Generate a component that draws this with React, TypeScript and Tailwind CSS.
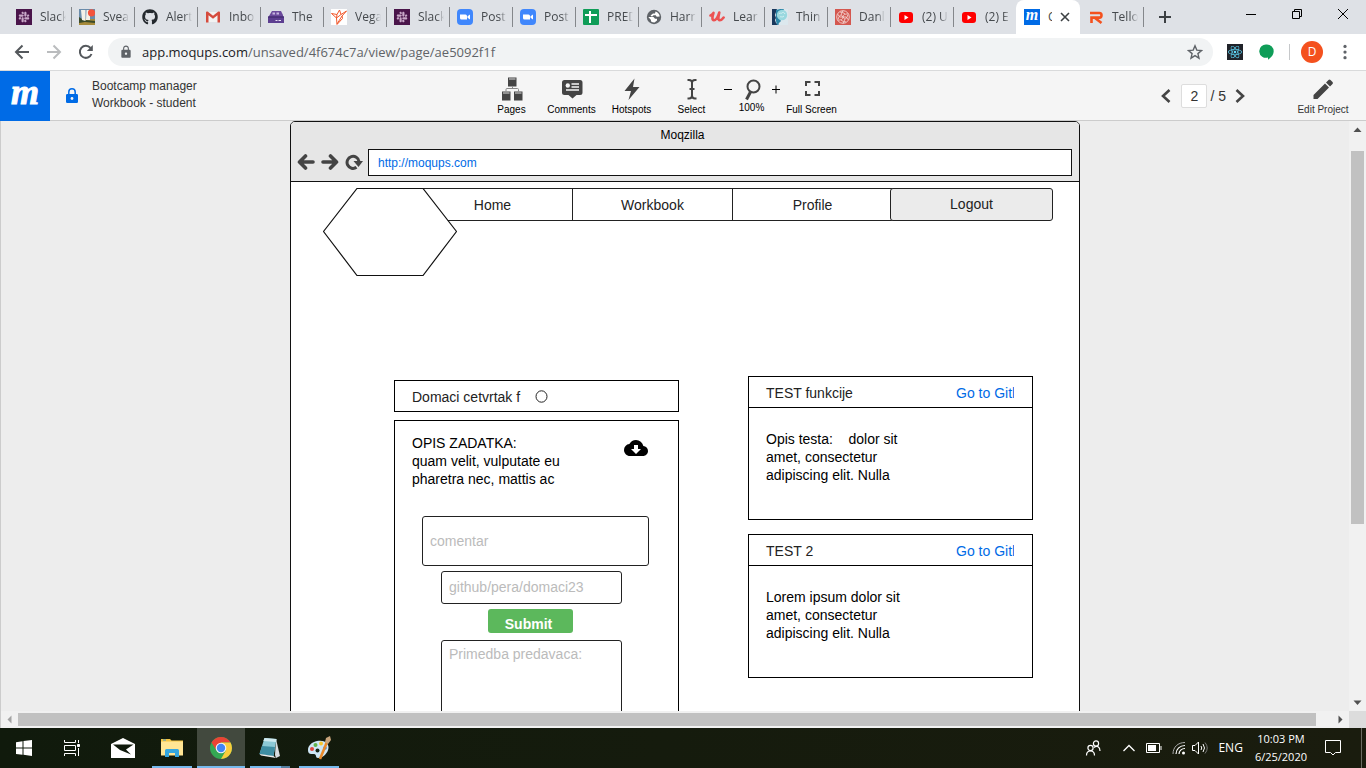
import type { ReactNode } from "react";
import { FaGithub, FaReact, FaSlack } from "react-icons/fa";
import { MdCloudDownload, MdLock } from "react-icons/md";

/* ---------- Favicons ---------- */

const SlackIcon = () => (
  <span className="flex size-4 shrink-0 items-center justify-center bg-[#4a154b]">
    <FaSlack className="size-3 text-[#c9a9c9]" />
  </span>
);

const SveaIcon = () => (
  <svg viewBox="0 0 16 16" className="size-4 shrink-0">
    <path fill="#6a8cab" d="M0 0h16v16H0z" />
    <path fill="#a68a3a" d="M0 10h16v6H0z" />
    <path fill="#3a4a2a" d="M0 8l3 2 3 1 10 1v2L6 13 0 14z" />
    <path fill="#f4f1e8" d="M2 1h4.500v11L3 11zM7.500 1H11v10H7z" />
    <circle cx="12.500" cy="3.800" r="3.600" fill="#f4533c" />
  </svg>
);

const GmailIcon = () => (
  <svg viewBox="0 0 16 16" className="size-4 shrink-0">
    <path fill="#f2f2f2" d="M2 3h12v10H2z" />
    <path fill="#d54b3d" d="M1 3.500C1 2.600 2.200 2.200 3 2.800l5 4 5-4c.8-.6 2-.2 2 .7V13.500h-2.500V6.300L8 9.800 3.500 6.300v7.200H1z" />
  </svg>
);

const ArchiveIcon = () => (
  <svg viewBox="0 0 16 16" className="size-4 shrink-0">
    <path fill="#6b4a9c" d="M4 2h9l2 4v2H1V7z" />
    <path fill="#c7b6e0" d="M4.500 3.500H7v2H4.500zM8.500 3.500H11v2H8.500z" />
    <path fill="#5d3f91" d="M0 7.500h16V14H0z" />
    <path fill="none" stroke="#3b2366" d="M0 8h16" />
    <path fill="none" stroke="#e9e0f5" d="M7.500 11.500h2M10.500 11.500h2.500" />
  </svg>
);

const VegaIcon = () => (
  <svg viewBox="0 0 16 16" className="size-4 shrink-0">
    <path fill="#fff" d="M0 0h16v16H0z" />
    <path fill="none" stroke="#f1582c" d="M.5 4.500L6 5.500 8.500 1l1.500 4.500 5.500-3.500-4.500 5 .5 2.500-5.500 6-.5-6.500zM6 5.500L5.500 9M10 5.500L5.500 9M11 7L6 15" />
  </svg>
);

const ZoomIcon = () => (
  <svg viewBox="0 0 16 16" className="size-4 shrink-0">
    <rect width="16" height="16" rx="4" fill="#4087fc" />
    <path fill="#fff" d="M3 5.500h5.500q1.500 0 1.500 1.500v3.500H4.500Q3 10.500 3 9zM10.500 7.300L13 5.500v5L10.500 8.800z" />
  </svg>
);

const SheetIcon = () => (
  <svg viewBox="0 0 16 16" className="size-4 shrink-0">
    <rect width="16" height="16" rx="1" fill="#0f9d58" />
    <path fill="none" stroke="#fff" strokeWidth="2" d="M2 6h12M7 2v12" />
  </svg>
);

const GlobeIcon = () => (
  <svg viewBox="0 0 16 16" className="size-4 shrink-0">
    <circle cx="8" cy="8" r="7.200" fill="#5f6368" />
    <path fill="#fff" d="M9.500 2.500C12 3.300 13.600 5.200 13.700 7.500l-3 .2-1-1.500H7.500L6 7.800 4.500 6.500 7 4.500h2zM2.300 8h5.200l1.500 1.700h2v1.800L8.500 13.600C5.500 13.500 4.500 12.500 5 11z" />
  </svg>
);

const UdemyIcon = () => (
  <svg viewBox="0 0 16 16" className="size-4 shrink-0">
    <path fill="none" stroke="#ec5252" strokeWidth="2.600" strokeLinecap="round" strokeLinejoin="round" d="M1.500 6.500C3 6 3.800 5 4.500 3.800 3.500 7 2.500 11 5 11.200 8 11.300 9.500 6 10.300 3.500 9.500 7 8.500 11 10.800 11.200 12.500 11.300 13.500 10 14.600 8.500" />
  </svg>
);

const HeadIcon = () => (
  <svg viewBox="0 0 16 16" className="size-4 shrink-0">
    <path fill="#dce8ee" d="M0 0h16v16H0z" />
    <path fill="#19375c" d="M0 0h5L3 6l1 3-1 2 1 3 3 2H0z" />
    <path fill="#2c86a8" d="M4 1l4-1h4l-5 9 2 3-2 2-1 2H5l-1-4z" />
    <circle cx="10" cy="6" r="5.200" fill="#9ad8df" />
    <path fill="none" stroke="#d5f1f3" d="M7 5c1-2 2 0 3-1s2-1 3 1M8 8c1-1 2 1 4-1" />
  </svg>
);

const KnotIcon = () => (
  <svg viewBox="0 0 16 16" className="size-4 shrink-0">
    <path fill="#d4574f" d="M0 0h16v16H0z" />
    <g fill="none" stroke="#f3d3cf" strokeWidth=".9">
      <circle cx="8" cy="8" r="6.300" />
      <path d="M8 8Q5 6 8 1.700M8 8Q8 4.500 13.500 5M8 8Q11.500 6.500 13.500 11M8 8Q11 10 8 14.300M8 8Q8 11.500 2.500 11M8 8Q4.500 9.500 2.500 5M5 3q3 0 5 2M12.800 6q-.5 3-3 4.500M11 13q-3 0-5-2M3.200 10q.5-3 3-4.500" />
    </g>
  </svg>
);

const YoutubeIcon = () => (
  <svg viewBox="0 0 16 16" className="size-4 shrink-0">
    <rect x="1" y="3" width="14" height="11" rx="3" fill="#f00" />
    <path fill="#fff" d="M6.500 6v5l4-2.500z" />
  </svg>
);

const MoqupsIcon = () => (
  <span className="flex size-4 shrink-0 items-center justify-center bg-[#006be6]">
    <span className="pb-1 font-['Liberation_Serif',serif] text-[16px] leading-4 font-bold italic text-white">m</span>
  </span>
);

const TelloIcon = () => (
  <svg viewBox="0 0 16 16" className="size-4 shrink-0">
    <path fill="none" stroke="#f4511e" strokeWidth="2.600" d="M2 4h9.500q2 0 2 2.300t-2 2.300H6.500L13.500 14M3.500 14V8.600h3" />
  </svg>
);

const tabs: { title: string; icon: ReactNode; last?: boolean }[] = [
  { title: "Slack", icon: <SlackIcon /> },
  { title: "Svea", icon: <SveaIcon /> },
  { title: "Alert", icon: <FaGithub className="size-4 shrink-0 text-[#24292e]" /> },
  { title: "Inbox", icon: <GmailIcon /> },
  { title: "The", icon: <ArchiveIcon /> },
  { title: "Vega", icon: <VegaIcon /> },
  { title: "Slack", icon: <SlackIcon /> },
  { title: "Post", icon: <ZoomIcon /> },
  { title: "Post", icon: <ZoomIcon /> },
  { title: "PRED", icon: <SheetIcon /> },
  { title: "Harr", icon: <GlobeIcon /> },
  { title: "Lear", icon: <UdemyIcon /> },
  { title: "Thin", icon: <HeadIcon /> },
  { title: "Danl", icon: <KnotIcon /> },
  { title: "(2) U", icon: <YoutubeIcon /> },
  { title: "(2) E", icon: <YoutubeIcon />, last: true },
];

function Tab({ title, icon, last }: { title: string; icon: ReactNode; last?: boolean }) {
  return (
    <button
      type="button"
      className={
        last
          ? "-mr-px flex h-5 w-16 min-w-0 items-center gap-2 border-r border-transparent pl-2"
          : "-mr-px flex h-5 w-16 min-w-0 items-center gap-2 border-r border-[#84878b] pl-2"
      }
    >
      {icon}
      <span className="w-[26px] overflow-hidden text-left whitespace-nowrap [mask-image:linear-gradient(to_right,black_70%,transparent)]">
        {title}
      </span>
    </button>
  );
}

function TabStrip() {
  return (
    <div className="flex h-[34px] shrink-0 items-center bg-[#dee1e6] pl-2 font-['Open_Sans',sans-serif] text-[12px] text-[#45494d]">
      {tabs.map((tab, i) => (
        <Tab key={i} {...tab} />
      ))}
      <div className="flex h-full w-16 items-center gap-2 rounded-t-lg bg-white pl-2">
        <MoqupsIcon />
        <span className="w-1 overflow-hidden">C</span>
        <button type="button" aria-label="Close tab">
          <svg viewBox="0 0 10 10" className="size-2.5">
            <path fill="none" stroke="#3c4043" strokeWidth="1.600" d="M1 1l8 8M9 1L1 9" />
          </svg>
        </button>
      </div>
      <Tab title="Tello" icon={<TelloIcon />} />
      <button type="button" aria-label="New tab" className="ml-4">
        <svg viewBox="0 0 12 12" className="size-3">
          <path fill="none" stroke="#3c4043" strokeWidth="2" d="M6 0v12M0 6h12" />
        </svg>
      </button>
      <div className="ml-auto flex h-7 self-start">
        <button type="button" aria-label="Minimize" className="flex w-[46px] items-center justify-center">
          <svg viewBox="0 0 10 10" className="size-2.5">
            <path fill="none" stroke="#000" d="M0 5.500h10" />
          </svg>
        </button>
        <button type="button" aria-label="Restore" className="flex w-[46px] items-center justify-center">
          <svg viewBox="0 0 10 10" className="size-2.5">
            <path fill="none" stroke="#000" d="M.5 2.500h7v7h-7zM2.500 2.500v-2h7v7h-2" />
          </svg>
        </button>
        <button type="button" aria-label="Close" className="flex w-[46px] items-center justify-center">
          <svg viewBox="0 0 10 10" className="size-2.5">
            <path fill="none" stroke="#000" d="M0 0l10 10M10 0L0 10" />
          </svg>
        </button>
      </div>
    </div>
  );
}

function AddressBar() {
  return (
    <div className="flex h-[37px] shrink-0 items-center border-b border-[#d9dadb] bg-white pl-[14px]">
      <div className="flex w-[94px] gap-4">
        <button type="button" aria-label="Back">
          <svg viewBox="0 0 16 16" className="size-4">
            <path fill="none" stroke="#54585c" strokeWidth="2" d="M15 8H2M8.500 1.500L2 8l6.500 6.500" />
          </svg>
        </button>
        <button type="button" aria-label="Forward">
          <svg viewBox="0 0 16 16" className="size-4">
            <path fill="none" stroke="#babcbe" strokeWidth="2" d="M1 8h13M7.500 1.500L14 8l-6.500 6.500" />
          </svg>
        </button>
        <button type="button" aria-label="Reload">
          <svg viewBox="0 0 16 16" className="size-4">
            <path fill="none" stroke="#54585c" strokeWidth="2" d="M13.500 10A6 6 0 1 1 12.500 4" />
            <path fill="#54585c" d="M14.800 1v6H8.800z" />
          </svg>
        </button>
      </div>
      <div className="flex h-7 flex-1 items-center rounded-full bg-[#f1f3f4] pr-[10px] pl-[11px] font-['Open_Sans',sans-serif] text-[13px] text-[#5f6368]">
        <MdLock className="size-3.5 shrink-0" />
        <div className="ml-[9px] flex-1 pt-px">
          <span className="text-[#202124]">app.moqups.com</span>/unsaved/4f674c7a/view/page/ae5092f1f
        </div>
        <button type="button" aria-label="Bookmark">
          <svg viewBox="0 0 16 16" className="size-4">
            <path fill="none" stroke="#5f6368" strokeWidth="1.400" d="M8 1.800l1.800 4.300 4.700.4-3.600 3.100 1.100 4.600L8 11.700l-4 2.500 1.100-4.600L1.500 6.500l4.700-.4z" />
          </svg>
        </button>
      </div>
      <div className="flex w-[153px] items-center pl-[14px]">
        <button type="button" aria-label="React tools" className="flex size-4 items-center justify-center bg-[#20232a]">
          <FaReact className="size-3.5 text-[#61dafb]" />
        </button>
        <button type="button" aria-label="Hangouts" className="ml-4">
          <svg viewBox="0 0 16 16" className="size-4">
            <path fill="#0f9d58" d="M8 .5a6.700 6.700 0 0 1 6.700 6.700c0 4-3 6.500-5.700 8.600v-2.300A6.700 6.700 0 1 1 8 .5z" />
          </svg>
        </button>
        <span className="ml-[14px] h-4 w-px bg-[#c6c8ca]" />
        <button type="button" className="ml-[11px] flex size-[22px] items-center justify-center rounded-full bg-[#f4511e] font-['Open_Sans',sans-serif] text-[12px] text-white">
          D
        </button>
        <button type="button" aria-label="Menu" className="ml-3">
          <svg viewBox="0 0 16 16" className="size-5" fill="#5f6368">
            <circle cx="8" cy="3.500" r="1.300" />
            <circle cx="8" cy="8" r="1.300" />
            <circle cx="8" cy="12.500" r="1.300" />
          </svg>
        </button>
      </div>
    </div>
  );
}

/* ---------- Moqups toolbar ---------- */

function Tool({ label, children }: { label: string; children: ReactNode }) {
  return (
    <button type="button" className="flex w-[60px] flex-col items-center gap-[3px] whitespace-nowrap">
      <svg viewBox="0 0 24 24" className="size-6">
        {children}
      </svg>
      <span className="text-[10px] leading-3">{label}</span>
    </button>
  );
}

function AppHeader() {
  return (
    <header className="flex h-[50px] shrink-0 bg-[#f5f5f5] text-[#333] shadow-[inset_0_-1px_0_#ccc]">
      <div className="flex flex-1 items-center">
        <a
          href="#"
          className="flex size-[50px] items-center justify-center bg-[#006be6] pb-2 font-['Liberation_Serif',serif] text-[36px] leading-none font-bold italic text-white [-webkit-text-stroke:1px_white]"
        >
          m
        </a>
        <svg viewBox="0 0 12 16" className="ml-4 h-4 w-3">
          <path fill="#006be6" d="M1.200 6h9.600q1.200 0 1.200 1.200v6.600q0 1.200-1.200 1.200H1.200Q0 15 0 13.800V7.200Q0 6 1.200 6z" />
          <path fill="none" stroke="#006be6" strokeWidth="1.500" d="M2.800 6.500V4a3.200 3.200 0 0 1 6.400 0v2.500" />
          <circle cx="6" cy="10.500" r="1.400" fill="#f5f5f5" />
        </svg>
        <div className="ml-[14px] pb-[3px] text-[12px] leading-[17px]">
          <div>Bootcamp manager</div>
          <div>Workbook - student</div>
        </div>
      </div>

      <div className="mr-[30px] flex items-start pt-1.5 text-black">
        <Tool label="Pages">
          <path fill="#444" d="M8 .5h8.500v9H8zM2 14.500h8.500v9H2zM14 14.500h8.500v9H14z" />
          <path fill="none" stroke="#888" d="M12.500 9.500v2M6 14.500v-2q0-1 1-1h10.500q1 0 1 1v2" />
          <path fill="none" stroke="#ddd" d="M9 2h6.500M3 16h6.500M15 16h6.500" />
        </Tool>
        <Tool label="Comments">
          <path fill="#444" d="M4.500 3h15.500q2.500 0 2.500 2.500v10q0 2.500-2.500 2.500h-3.500L12.500 21.500 8.500 18h-4Q2 18 2 15.500v-10Q2 3 4.500 3z" />
          <circle cx="7.800" cy="8.500" r="2.200" fill="#f5f5f5" />
          <path fill="none" stroke="#f5f5f5" strokeWidth="1.400" d="M11.500 7H19M11.500 10H19M6 13H19" />
        </Tool>
        <Tool label="Hotspots">
          <path fill="#444" d="M14.500 1.500L4.500 14H11L8.500 23 19.500 10H13z" />
        </Tool>
        <Tool label="Select">
          <path fill="none" stroke="#444" strokeWidth="2" d="M7.500 3H9q3 0 3 2.500v13q0 3-3 3H7.500M16.500 3H15q-3 0-3 2.500v13q0 3 3 3h1.500M9.500 12h5" />
        </Tool>
        <div className="flex w-[60px] flex-col items-center">
          <div className="flex items-center gap-2">
            <button type="button" aria-label="Zoom out">
              <svg viewBox="0 0 12 12" className="size-3">
                <path fill="none" stroke="#000" d="M2 6.500h8" />
              </svg>
            </button>
            <svg viewBox="0 0 20 24" className="h-6 w-5">
              <circle cx="11.500" cy="9.500" r="6" fill="none" stroke="#444" strokeWidth="2" />
              <path fill="none" stroke="#444" strokeWidth="3" d="M8.500 15l-4 7.500" />
            </svg>
            <button type="button" aria-label="Zoom in">
              <svg viewBox="0 0 12 12" className="size-3">
                <path fill="none" stroke="#000" d="M2 6.500h8M6 2.500v8" />
              </svg>
            </button>
          </div>
          <span className="mt-px text-[10px] leading-3">100%</span>
        </div>
        <Tool label="Full Screen">
          <path fill="none" stroke="#444" strokeWidth="2" d="M6 9V5h4.500M14.500 5H19v4M19 14v4h-4.500M10.500 18H6v-4" />
        </Tool>
      </div>

      <div className="flex flex-1 items-center justify-end pr-[13px]">
        <button type="button" aria-label="Previous page">
          <svg viewBox="0 0 10 14" className="h-3.5 w-2.5">
            <path fill="none" stroke="#444" strokeWidth="2.600" d="M8.500 1L2 7l6.500 6" />
          </svg>
        </button>
        <input
          type="text"
          aria-label="Page"
          defaultValue="2"
          className="ml-[10px] h-6 w-[26px] rounded-xs border border-[#ddd] bg-white text-center text-[14px]"
        />
        <span className="ml-[3px] text-[14px] leading-6">/ 5</span>
        <button type="button" aria-label="Next page" className="ml-[9px]">
          <svg viewBox="0 0 10 14" className="h-3.5 w-2.5">
            <path fill="none" stroke="#444" strokeWidth="2.600" d="M1.500 1L8 7l-6.500 6" />
          </svg>
        </button>
        <div className="ml-12 self-start pt-1.5">
          <Tool label="Edit Project">
            <path fill="#444" d="M2.500 18L14 6.500l4 4L6.500 22h-4zM15 5.500L17.500 3q1-1 2 0l2 2q1 1 0 2L19 9.500z" />
          </Tool>
        </div>
      </div>
    </header>
  );
}

/* ---------- Mockup page ---------- */

function MockBrowserBar() {
  return (
    <div className="rounded-t-[4px] border-b border-[#111] bg-[#e6e6e6] pr-[7px] pb-[5px] pl-1.5">
      <div className="pt-1 pr-1 pb-1 text-center text-[12px] leading-[19px] text-black">Moqzilla</div>
      <div className="flex items-center text-[#444]">
        <div className="mr-[5px] flex gap-1.5 pb-0.5">
          <svg viewBox="0 0 18 18" className="size-[18px]">
            <path fill="none" stroke="currentColor" strokeWidth="3.600" strokeLinecap="round" strokeLinejoin="round" d="M16 9H3M8.500 3L2.500 9l6 6" />
          </svg>
          <svg viewBox="0 0 18 18" className="size-[18px]">
            <path fill="none" stroke="currentColor" strokeWidth="3.600" strokeLinecap="round" strokeLinejoin="round" d="M2 9h13M9.500 3l6 6-6 6" />
          </svg>
          <svg viewBox="0 0 18 18" className="size-[18px]">
            <path fill="none" stroke="currentColor" strokeWidth="3" d="M11.500 14.300A6 6 0 1 1 14 8.500" />
            <path fill="currentColor" d="M8.500 8H18l-4.500 6z" />
          </svg>
        </div>
        <input
          type="text"
          aria-label="Address"
          defaultValue="http://moqups.com"
          className="h-[27px] min-w-0 flex-1 border border-[#111] bg-white px-[9px] text-[12px] text-[#006be6]"
        />
      </div>
    </div>
  );
}

const navLinkClass = "flex w-[161px] items-center justify-center border border-[#222] pt-0.5";

function MockNav() {
  return (
    <div className="flex items-start pl-8 text-[14px] text-[#222]">
      <svg viewBox="0 0 134 88" className="relative z-10 h-[88px] w-[134px] shrink-0">
        <path fill="#fff" stroke="#111" strokeWidth="1.200" d="M34 .5h66l33.500 43L100 87.500H34L.5 43.500z" />
      </svg>
      <nav className="-ml-[45px] flex h-[33px]">
        <a href="#" className={navLinkClass}>Home</a>
        <a href="#" className={`${navLinkClass} -ml-px`}>Workbook</a>
        <a href="#" className={`${navLinkClass} -ml-px`}>Profile</a>
        <button type="button" className="-ml-[3px] w-[163px] rounded-[3px] border border-[#222] bg-[#ebebeb]">
          Logout
        </button>
      </nav>
    </div>
  );
}

const fieldClass =
  "rounded-[3px] border border-[#222] bg-white px-[7px] text-[14px] placeholder:text-[#bbb]";

function Homework() {
  return (
    <section className="mt-1 flex w-[285px] flex-col gap-2">
      <div className="flex h-8 items-center border border-black px-[17px] text-[#222]">
        <h2 className="pt-0.5">Domaci cetvrtak f</h2>
        <svg viewBox="0 0 13 13" className="ml-[15px] size-[13px]">
          <ellipse cx="6.500" cy="6.500" rx="5.500" ry="5.700" fill="none" stroke="#222" />
        </svg>
      </div>
      <div className="border border-black pt-[13px] pb-10">
        <div className="flex justify-between pr-[30px] pl-[17px]">
          <p>
            OPIS ZADATKA:
            <br />
            quam velit, vulputate eu
            <br />
            pharetra nec, mattis ac
          </p>
          <button type="button" aria-label="Download" className="mt-0.5 self-start">
            <MdCloudDownload className="size-6" />
          </button>
        </div>
        <div className="mt-7 mr-[29px] ml-[27px] flex flex-col">
          <input type="text" aria-label="comentar" placeholder="comentar" className={`${fieldClass} h-[50px]`} />
          <div className="ml-[19px] flex w-[181px] flex-col">
            <input
              type="text"
              aria-label="github"
              placeholder="github/pera/domaci23"
              className={`${fieldClass} mt-[5px] h-[33px] pb-0.5`}
            />
            <button
              type="button"
              className="mt-[5px] ml-[47px] h-6 w-[85px] rounded-[3px] bg-[#5cb85c] pt-1.5 pr-1 text-[14px] leading-[18px] font-bold text-white"
            >
              Submit
            </button>
            <textarea
              aria-label="Primedba predavaca"
              placeholder="Primedba predavaca:"
              className={`${fieldClass} mt-[7px] h-[100px] resize-none py-1`}
            />
          </div>
        </div>
      </div>
    </section>
  );
}

function TestCard({ title, text }: { title: string; text: string }) {
  return (
    <article className="h-36 border border-black">
      <div className="flex h-[31px] items-center justify-between border-b border-black pt-0.5 pr-[18px] pl-[17px]">
        <h2 className="text-[#222]">{title}</h2>
        <a href="#" className="w-[58px] overflow-hidden whitespace-nowrap text-[#006be6]">
          Go to Github
        </a>
      </div>
      <p className="px-[17px] pt-[22px] whitespace-pre">{text}</p>
    </article>
  );
}

function MockPage() {
  return (
    <div className="w-[790px] shrink-0 self-start rounded-t-[5px] border border-[#111] bg-white">
      <MockBrowserBar />
      <div className="pt-1.5">
        <MockNav />
        <div className="mt-[100px] flex items-start gap-[69px] pl-[103px] text-[14px] leading-[18px] text-black">
          <Homework />
          <section className="flex w-[285px] flex-col gap-[14px]">
            <TestCard
              title="TEST funkcije"
              text={"Opis testa:\u00a0\u00a0\u00a0 dolor sit\namet, consectetur\nadipiscing elit. Nulla"}
            />
            <TestCard title="TEST 2" text={"Lorem ipsum dolor sit\namet, consectetur\nadipiscing elit. Nulla"} />
          </section>
        </div>
      </div>
    </div>
  );
}

/* ---------- Scroll bars ---------- */

function Arrow({ d, fill }: { d: string; fill: string }) {
  return (
    <svg viewBox="0 0 17 17" className="size-[17px] shrink-0">
      <path d={d} fill={fill} />
    </svg>
  );
}

function Canvas() {
  return (
    <main className="flex min-h-0 flex-1 flex-col border-l border-[#ccc]">
      <div className="flex min-h-0 flex-1">
        <div className="flex min-w-0 flex-1 justify-center overflow-hidden bg-[#ededed] pl-5">
          <MockPage />
        </div>
        <div className="flex w-[17px] shrink-0 flex-col items-center bg-[#f1f1f1]">
          <Arrow d="M4.500 11h8l-4-4.500z" fill="#505050" />
          <span className="flex-[13]" />
          <span className="w-[13px] flex-[373] bg-[#c1c1c1]" />
          <span className="flex-[170]" />
          <Arrow d="M4.500 6.500h8l-4 4.500z" fill="#505050" />
        </div>
      </div>
      <div className="flex h-[17px] shrink-0 items-center bg-[#f1f1f1]">
        <Arrow d="M10.500 4.500v8l-4-4z" fill="#a3a3a3" />
        <span className="h-[13px] flex-[1298] bg-[#c1c1c1]" />
        <span className="flex-[16]" />
        <Arrow d="M6.500 4.500v8l4-4z" fill="#505050" />
        <span className="size-[17px] bg-[#dcdcdc]" />
      </div>
    </main>
  );
}

/* ---------- Taskbar ---------- */

function TaskButton({ label, className, children }: { label: string; className: string; children: ReactNode }) {
  return (
    <button type="button" aria-label={label} className={`flex h-10 w-12 items-center justify-center ${className}`}>
      {children}
    </button>
  );
}

function Taskbar() {
  return (
    <footer className="flex h-10 shrink-0 bg-linear-to-r from-[#101a0c] to-[#1a1c0e] font-['Open_Sans',sans-serif] text-[12px] text-white">
      <div className="flex">
        <TaskButton label="Start" className="">
          <svg viewBox="0 0 16 16" className="size-4" fill="#fff">
            <path d="M0 2.200L6.500 1.300v6.300H0zM7.500 1.100L16 0v7.600H7.500zM0 8.500h6.500v6.300L0 13.900zM7.500 8.500H16V16l-8.500-1.200z" />
          </svg>
        </TaskButton>
        <TaskButton label="Task view" className="">
          <svg viewBox="0 0 16 16" className="size-4" fill="none" stroke="#fff">
            <path d="M.5 0v2.500h11V0M.5 16v-2.500h11V16M.5 5.500h11v5H.5zM14.500 0v3M14.500 8v8" />
            <path fill="#fff" d="M13.500 4.500h2v2h-2z" />
          </svg>
        </TaskButton>
        <div className="ml-[3px] flex gap-px">
          <TaskButton label="Mail" className="">
            <svg viewBox="0 0 24 20" className="h-5 w-6">
              <path fill="#fff" d="M0 6L12 0l12 6v14H0z" />
              <path fill="#101a0c" d="M2 6.500h20.500L15 11.500l5 5L9 12z" />
            </svg>
          </TaskButton>
          <TaskButton label="File Explorer" className="bg-[linear-gradient(#76b9ed,#76b9ed)] bg-[length:40px_2px] bg-bottom bg-no-repeat">
            <svg viewBox="0 0 22 20" className="h-5 w-[22px]">
              <path fill="#f5c542" d="M0 1h9l1.500 1.500H22V7H0z" />
              <path fill="#ffe594" d="M0 3.500h22v14H0z" />
              <path fill="#35a7e0" d="M4 19v-6.500q0-1.500 1.500-1.500h11q1.500 0 1.500 1.500V19h-4v-4H8v4z" />
              <path fill="#3b97d3" d="M2 1.500h3v1H2z" />
            </svg>
          </TaskButton>
          <TaskButton label="Chrome" className="border-y-2 border-t-transparent border-b-[#76b9ed] bg-[#42493e]">
            <svg viewBox="0 0 22 22" className="size-[22px]">
              <circle cx="11" cy="11" r="11" fill="#34a853" />
              <path fill="#ea4335" d="M1.500 5.500A11 11 0 0 1 20.500 5.500H11L6.500 13.500z" />
              <path fill="#fbcc3c" d="M20.500 5.500A11 11 0 0 1 11 22l4.800-8.500L11 5.500z" />
              <circle cx="11" cy="11" r="5.300" fill="#f5f5f5" />
              <circle cx="11" cy="11" r="4.200" fill="#4285f4" />
            </svg>
          </TaskButton>
          <TaskButton label="Notepad" className="bg-[linear-gradient(to_right,#76b9ed_78%,#557fa0_78%)] bg-[length:40px_2px] bg-bottom bg-no-repeat">
            <svg viewBox="0 0 24 24" className="size-6">
              <path fill="#d8dde0" d="M18 3l4 17-4 2-1-3z" />
              <path fill="#8cc9d6" d="M6.500 2L18.500 3l-3 17L1.500 18z" />
              <path fill="#3f8ea3" d="M4 10l13 1-1.500 9-14-2z" />
              <path fill="#cfeaf0" d="M6.500 2L18.500 3l-.6 3L5.300 5z" />
              <path fill="#eee" d="M1.500 18l14 2 2.500 2-15-2.500z" />
            </svg>
          </TaskButton>
          <TaskButton label="Paint" className="bg-[linear-gradient(#76b9ed,#76b9ed)] bg-[length:40px_2px] bg-bottom bg-no-repeat">
            <svg viewBox="0 0 24 24" className="size-6">
              <path fill="#cfe6f5" d="M10 5C17 3.500 22 7 21.500 12S16 22 11 22c-3 0-1-4-4-4-2.500 0-6 .5-6-4S5 6 10 5z" />
              <circle cx="5" cy="13" r="2" fill="#e2453c" />
              <circle cx="8.500" cy="9" r="2" fill="#62b34b" />
              <circle cx="14" cy="7.500" r="2" fill="#f6c62f" />
              <circle cx="10.500" cy="14.500" r="2" fill="#152315" />
              <circle cx="18" cy="12" r="1.800" fill="#3f82d0" />
              <path fill="none" stroke="#e98a2b" strokeWidth="2.600" d="M20 6l-7 17" />
              <path fill="#c9a57c" d="M18 6l1-4 4-2 1 4-3 4z" />
            </svg>
          </TaskButton>
        </div>
      </div>

      <div className="ml-auto flex items-center">
        <svg viewBox="0 0 16 16" className="size-4" fill="none" stroke="#fff" strokeWidth="1.200">
          <circle cx="11" cy="3.500" r="2.600" />
          <circle cx="5.500" cy="8" r="2.600" />
          <path d="M1.500 15.500c0-6 8-6 8 0M9 7.500c3-2.500 6-.5 6 3.500" />
        </svg>
        <svg viewBox="0 0 12 8" className="ml-[22px] h-2 w-3" fill="none" stroke="#fff" strokeWidth="1.300">
          <path d="M.5 7L6 1.500 11.500 7" />
        </svg>
        <svg viewBox="0 0 16 10" className="ml-[11px] h-2.5 w-4">
          <path fill="none" stroke="#fff" d="M.5.5h13v9H.5zM15 3v4" />
          <path fill="#fff" d="M2 2h8v6H2z" />
        </svg>
        <svg viewBox="0 0 14 14" className="ml-2.5 size-3.5" fill="none" stroke="#fff">
          <path stroke="#aaa" d="M1 13C1 6 6 1.500 13 1.500" />
          <path d="M4 13c0-5 4-8.500 9-8.500M7 13c0-3 2.500-5.500 6-5.500" strokeWidth="1.200" />
          <circle cx="11.500" cy="12" r="1.500" fill="#fff" stroke="none" />
        </svg>
        <svg viewBox="0 0 16 14" className="ml-1.5 h-3.5 w-4" fill="none" stroke="#fff">
          <path d="M.5 4.500H3L6.500 1v12L3 9.500H.5zM9 5q1.500 2 0 4M11 3q3 4 0 8" />
          <path stroke="#777" d="M13 1.500q4.500 5.500 0 11" />
        </svg>
        <span className="ml-2.5">ENG</span>
        <div className="ml-3 text-center text-[11px] leading-[18px]">
          <div>10:03 PM</div>
          <div>6/25/2020</div>
        </div>
        <svg viewBox="0 0 16 16" className="ml-[18px] size-4" fill="none" stroke="#fff">
          <path d="M.5.500h15v12H10.500L8 15l-2.500-2.500h-5z" />
        </svg>
        <span className="mr-1 ml-5 h-10 w-px bg-[#6a6c62]" />
      </div>
    </footer>
  );
}

export default function App() {
  return (
    <div className="flex h-screen flex-col overflow-hidden font-['Liberation_Sans',Arial,sans-serif]">
      <TabStrip />
      <AddressBar />
      <AppHeader />
      <Canvas />
      <Taskbar />
    </div>
  );
}
